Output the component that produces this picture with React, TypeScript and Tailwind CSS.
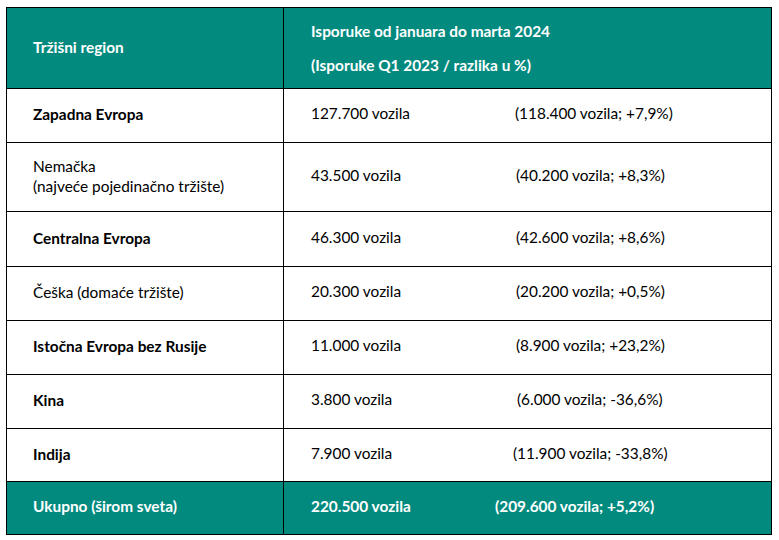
type Row = {
  region: string[];
  bold: boolean;
  value: string;
  prev: string;
  h: string;
  gap: string;
};

const rows: Row[] = [
  { region: ["Zapadna Evropa"], bold: true, value: "127.700 vozila", prev: "(118.400 vozila; +7,9%)", h: "h-[54px]", gap: "w-[204px]" },
  { region: ["Nemačka", "(najveće pojedinačno tržište)"], bold: false, value: "43.500 vozila", prev: "(40.200 vozila; +8,3%)", h: "h-[69px]", gap: "w-[205px]" },
  { region: ["Centralna Evropa"], bold: true, value: "46.300 vozila", prev: "(42.600 vozila; +8,6%)", h: "h-[55px]", gap: "w-[205px]" },
  { region: ["Češka (domaće tržište)"], bold: false, value: "20.300 vozila", prev: "(20.200 vozila; +0,5%)", h: "h-[54px]", gap: "w-[205px]" },
  { region: ["Istočna Evropa bez Rusije"], bold: true, value: "11.000 vozila", prev: "(8.900 vozila; +23,2%)", h: "h-[54px]", gap: "w-[205px]" },
  { region: ["Kina"], bold: true, value: "3.800 vozila", prev: "(6.000 vozila; -36,6%)", h: "h-[54px]", gap: "w-[206px]" },
  { region: ["Indija"], bold: true, value: "7.900 vozila", prev: "(11.900 vozila; -33,8%)", h: "h-[53px]", gap: "w-[202px]" },
];

export default function App() {
  return (
    <div className="min-h-screen bg-white pl-[6px] pt-[7px] font-['Lato',sans-serif] text-[15.4px] text-black">
      <div className="w-[766px] border border-black">
        <div className="grid h-[81px] grid-cols-[277px_1fr] border-b border-black bg-[#038a7f] font-bold text-white">
          <div className="flex items-center border-r border-black pl-[26px]">Tržišni region</div>
          <div className="flex flex-col justify-center pl-[27px] leading-[34px]">
            <div>Isporuke od januara do marta 2024</div>
            <div>(Isporuke Q1 2023 / razlika u %)</div>
          </div>
        </div>

        {rows.map((row) => (
          <div key={row.value} className={`grid grid-cols-[277px_1fr] border-b border-black ${row.h}`}>
            <div
              className={`flex flex-col justify-center border-r border-black pb-[3px] pl-[26px] leading-[20px] ${
                row.bold ? "font-bold" : ""
              }`}
            >
              {row.region.map((line) => (
                <div key={line}>{line}</div>
              ))}
            </div>
            <div className="flex items-center pb-[3px] pl-[27px]">
              <span className={`shrink-0 ${row.gap}`}>{row.value}</span>
              <span>{row.prev}</span>
            </div>
          </div>
        ))}

        <div className="grid h-[52px] grid-cols-[277px_1fr] bg-[#038a7f] font-bold text-white">
          <div className="flex items-center border-r border-black pb-[3px] pl-[26px]">Ukupno (širom sveta)</div>
          <div className="flex items-center pb-[3px] pl-[27px]">
            <span className="w-[184px] shrink-0">220.500 vozila</span>
            <span>(209.600 vozila; +5,2%)</span>
          </div>
        </div>
      </div>
    </div>
  );
}
